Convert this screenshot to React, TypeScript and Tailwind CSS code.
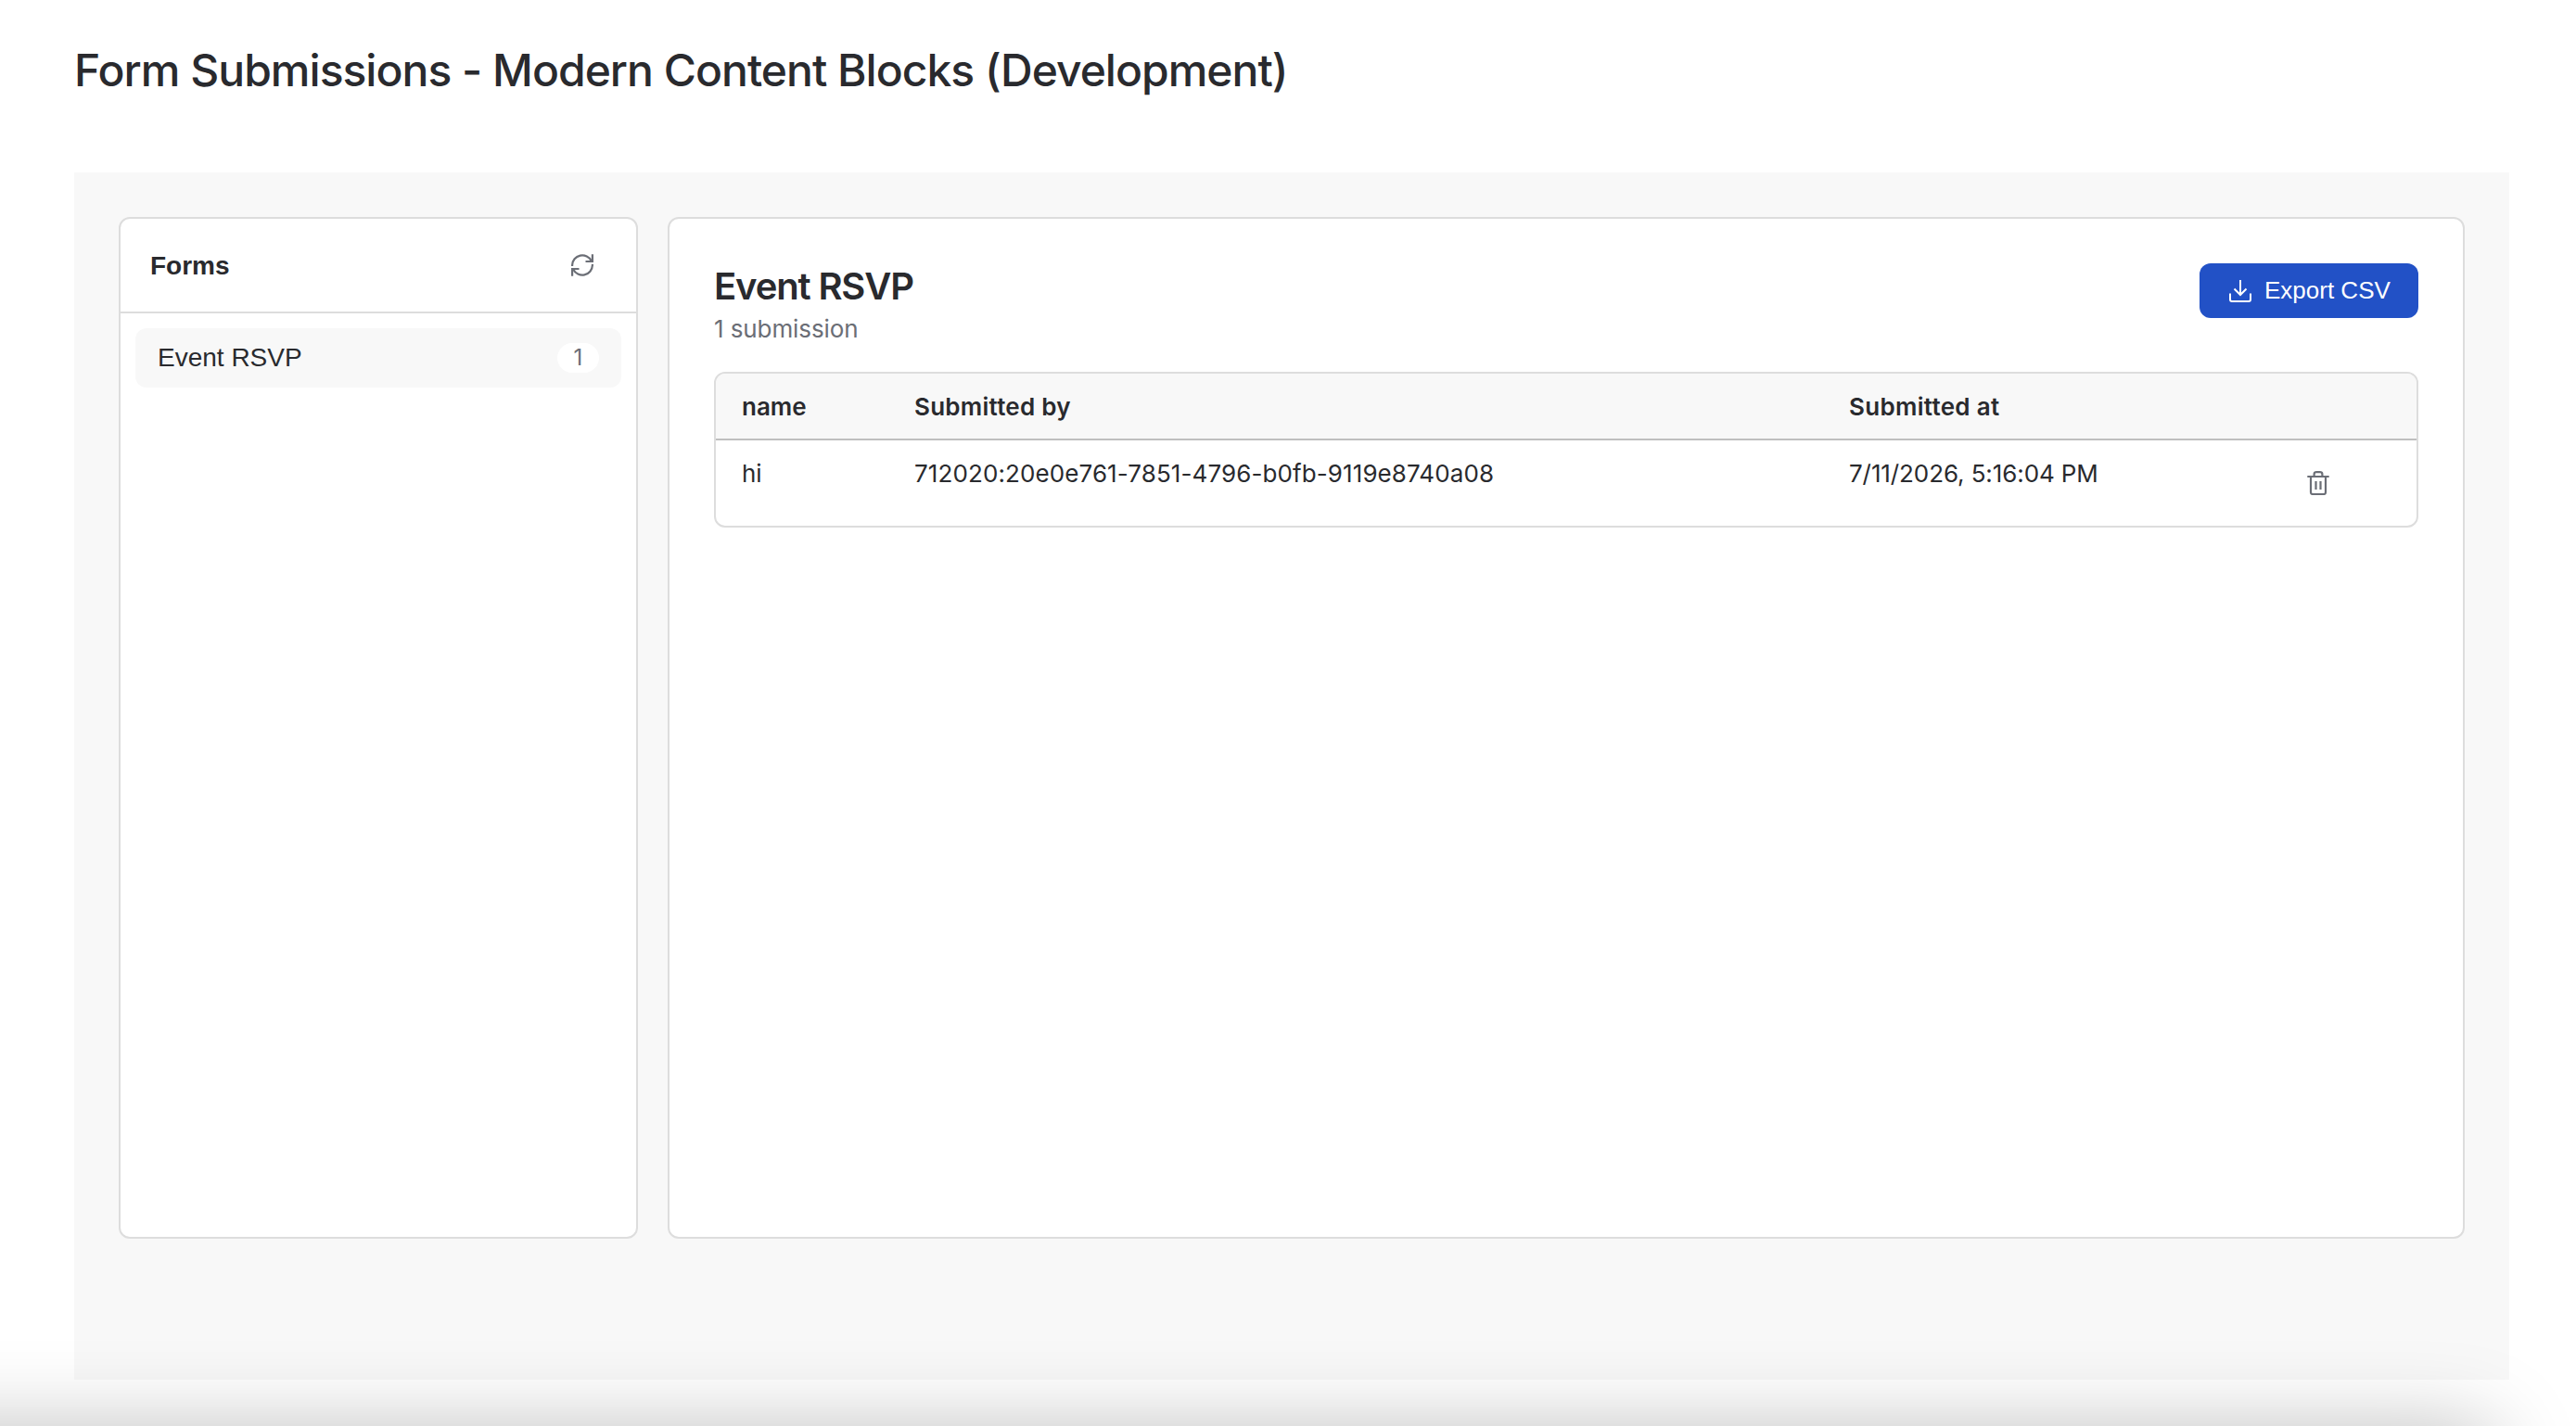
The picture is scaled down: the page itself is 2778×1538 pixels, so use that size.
import React from "react";

const inter = "font-[Inter,sans-serif]";
const arial = "font-['Liberation_Sans',Arial,sans-serif]";

function RefreshIcon() {
  return (
    <svg width="24" height="24" viewBox="0 0 24 24" fill="none" stroke="#6b6e76" strokeWidth="2.200">
      <path d="M1.100 13v-1A10.900 10.900 0 0 1 21.800 7.500M22.900 11v1A10.900 10.900 0 0 1 2.200 16.500" />
      <path d="M22.900 0.300V8H15.500M1.100 23.700V16H8.500" />
    </svg>
  );
}

function DownloadIcon() {
  return (
    <svg width="24" height="24" viewBox="0 0 24 24" fill="none" stroke="white" strokeWidth="2">
      <path d="M12 0v16M5.500 9.500 12 16l6.500-6.500" />
      <path d="M1 14.500V21a2 2 0 0 0 2 2h18a2 2 0 0 0 2-2v-6.500" />
    </svg>
  );
}

function TrashIcon() {
  return (
    <svg width="24" height="26" viewBox="0 0 24 26" fill="none" stroke="#6b6e76" strokeWidth="2.200">
      <path d="M0.300 6h23.400M7.600 6V3.500A2.300 2.300 0 0 1 9.900 1.200h4.200A2.300 2.300 0 0 1 16.400 3.500V6" />
      <path d="M4 6v17a2 2 0 0 0 2 2h12a2 2 0 0 0 2-2V6M9.500 11v9M14.500 11v9" />
    </svg>
  );
}

export default function App() {
  return (
    <div className={`${inter} relative h-[1538px] w-[2778px] overflow-hidden bg-white pr-[72px] pl-20 text-[#292a2e]`}>
      <h1 className="flex h-[186px] items-start pt-[48px] text-[48px] leading-[56px] font-medium tracking-[-0.98px] whitespace-nowrap">
        Form Submissions - Modern Content Blocks (Development)
      </h1>
      <main className="flex h-[1302px] gap-8 bg-[#f8f8f8] p-12">
        <aside className="h-[1102px] w-[560px] shrink-0 rounded-[12px] border-2 border-[#dddddd] bg-white">
          <div className={`${arial} flex h-[102px] items-center justify-between border-b-2 border-[#dddddd] pr-[46px] pl-8 text-[28px] font-bold`}>
            <span className="pt-[2px]">Forms</span>
            <RefreshIcon />
          </div>
          <div className="p-4">
            <div className="flex h-16 items-center justify-between rounded-[12px] bg-[#f8f8f8] px-6">
              <span className={`${arial} text-[28px]`}>Event RSVP</span>
              <span className="flex h-8 w-[45px] items-center justify-center rounded-full bg-white text-[24px] text-[#6b6e76]">1</span>
            </div>
          </div>
        </aside>
        <section className="h-[1102px] flex-1 rounded-[12px] border-2 border-[#dddddd] bg-white p-12">
          <div className="flex h-[117px] items-start justify-between">
            <div className="pt-px">
              <h2 className="text-[40px] leading-[48px] font-semibold tracking-[-1.15px]">Event RSVP</h2>
              <p className="pt-[2px] text-[26px] leading-[40px] tracking-[-0.1px] text-[#6b6e76]">1 submission</p>
            </div>
            <button className={`${arial} flex h-[59px] w-[236px] items-center rounded-[12px] bg-[#2251c6] pt-px pl-8 text-[26px] whitespace-nowrap text-white`}>
              <DownloadIcon />
              <span className="pb-[2px] pl-[14px]">Export CSV</span>
            </button>
          </div>
          <div className="h-[168px] overflow-hidden rounded-[12px] border-2 border-[#dddddd] text-[26px]">
            <div className="grid h-[72px] grid-cols-[186px_1008px_1fr] items-center border-b-2 border-[#bfbfbf] bg-[#f8f8f8] pl-7 font-semibold">
              <span>name</span>
              <span className="tracking-[0.25px]">Submitted by</span>
              <span className="tracking-[0.3px]">Submitted at</span>
            </div>
            <div className="grid grid-cols-[186px_1008px_1fr_118px] pt-4 pl-7 leading-[40px]">
              <span>hi</span>
              <span className="tracking-[0.1px]">712020:20e0e761-7851-4796-b0fb-9119e8740a08</span>
              <span className="tracking-[-0.1px]">7/11/2026, 5:16:04 PM</span>
              <span className="pt-[17px]"><TrashIcon /></span>
            </div>
          </div>
        </section>
      </main>
      <div className="absolute -left-[200px] top-[1540px] h-[200px] w-[2888px] rounded-[20px] shadow-[0_0_90px_rgba(0,0,0,0.26)]" />
    </div>
  );
}
